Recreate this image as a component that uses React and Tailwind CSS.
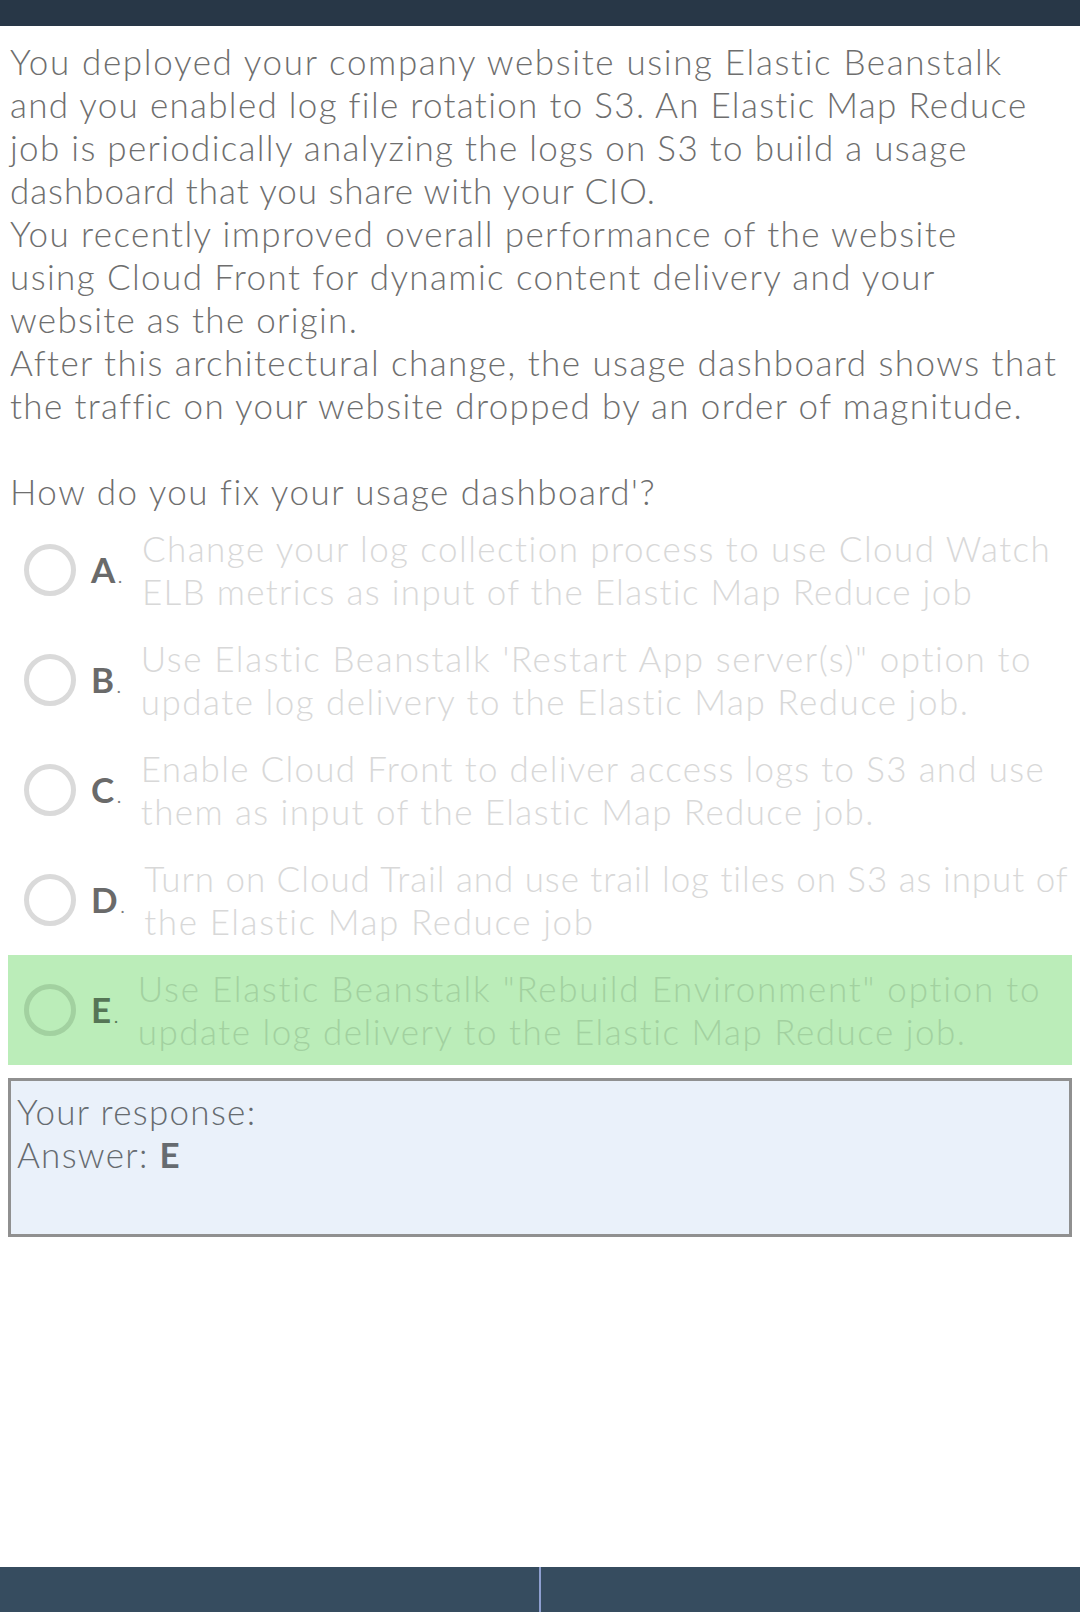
const intro = [
  ['You deployed your company website using Elastic Beanstalk', 'tracking-[1.65px]'],
  ['and you enabled log file rotation to S3. An Elastic Map Reduce', 'tracking-[1.3px]'],
  ['job is periodically analyzing the logs on S3 to build a usage', 'tracking-[1.3px]'],
  ['dashboard that you share with your CIO.', 'tracking-[0.95px]'],
  ['You recently improved overall performance of the website', 'tracking-[1.4px]'],
  ['using Cloud Front for dynamic content delivery and your', 'tracking-[1.4px]'],
  ['website as the origin.', 'tracking-[1.3px]'],
  ['After this architectural change, the usage dashboard shows that', 'tracking-[1.45px]'],
  ['the traffic on your website dropped by an order of magnitude.', 'tracking-[1.35px]'],
]

const options = [
  {
    key: 'A',
    lines: [
      ['Change your log collection process to use Cloud Watch', 'tracking-[1.45px]'],
      ['ELB metrics as input of the Elastic Map Reduce job', 'tracking-[1.3px]'],
    ],
  },
  {
    key: 'B',
    lines: [
      ['Use Elastic Beanstalk \'Restart App server(s)" option to', 'tracking-[1.6px]'],
      ['update log delivery to the Elastic Map Reduce job.', 'tracking-[1.5px]'],
    ],
  },
  {
    key: 'C',
    lines: [
      ['Enable Cloud Front to deliver access logs to S3 and use', 'tracking-[1.3px]'],
      ['them as input of the Elastic Map Reduce job.', 'tracking-[1.4px]'],
    ],
  },
  {
    key: 'D',
    lines: [
      ['Turn on Cloud Trail and use trail log tiles on S3 as input of', 'tracking-[0.95px]'],
      ['the Elastic Map Reduce job', 'tracking-[1.6px]'],
    ],
  },
  {
    key: 'E',
    lines: [
      ['Use Elastic Beanstalk "Rebuild Environment" option to', 'tracking-[1.75px]'],
      ['update log delivery to the Elastic Map Reduce job.', 'tracking-[1.5px]'],
    ],
    correct: true,
  },
]

function Option({ option }) {
  const { key, lines, correct } = option
  return (
    <div
      className={`flex items-center py-[12px] ${
        correct ? 'mx-[8px] bg-[#bbedb9] pl-[16px]' : 'pl-[24px]'
      }`}
    >
      <div
        className={`w-[52px] h-[52px] rounded-full border-[5px] flex-shrink-0 ${
          correct ? 'border-[#a2d1a0]' : 'border-[#dadada]'
        }`}
      />
      <div className="ml-[15px] mt-[3px] flex items-baseline tracking-normal">
        <span className={`font-bold ${correct ? 'text-[#567556]' : 'text-[#6a6a6a]'}`}>{key}</span>
        <span className={`ml-[2px] text-[24px] ${correct ? 'text-[#567556]' : 'text-[#7a7a7a]'}`}>.</span>
      </div>
      <div className={`ml-[19px] ${correct ? 'text-[#a2d1a0]' : 'text-[#d8d8d8]'}`}>
        {lines.map(([text, tracking]) => (
          <div key={text} className={`whitespace-nowrap ${tracking}`}>
            {text}
          </div>
        ))}
      </div>
    </div>
  )
}

export default function App() {
  return (
    <div
      className="min-h-[1612px] flex flex-col bg-white text-[35px] leading-[43px] font-light tracking-[1.3px] [font-variant-ligatures:none]"
      style={{ fontFamily: 'Lato, "Noto Sans", sans-serif' }}
    >
      <div className="h-[26px] bg-[#283747]" />

      <div className="px-[10px] pt-[14px] text-[#6e6e6e]">
        <div>
          {intro.map(([text, tracking]) => (
            <div key={text} className={`whitespace-nowrap ${tracking}`}>
              {text}
            </div>
          ))}
        </div>
        <p className="mt-[43px] tracking-[1.5px]">How do you fix your usage dashboard'?</p>
      </div>

      <div className="mt-[2px]">
        {options.map((o) => (
          <Option key={o.key} option={o} />
        ))}
      </div>

      <div className="mx-[8px] mt-[13px] h-[159px] border-[3px] border-[#909090] bg-[#eaf1fa] px-[6px] pt-[9px] text-[#666b70]">
        <div>Your response:</div>
        <div>
          Answer: <span className="font-bold">E</span>
        </div>
      </div>

      <div className="flex-1" />

      <div className="h-[45px] flex bg-[#364c5f]">
        <div className="flex-1" />
        <div className="w-[2px] bg-[#8e9fd0]" />
        <div className="flex-1" />
      </div>
    </div>
  )
}
